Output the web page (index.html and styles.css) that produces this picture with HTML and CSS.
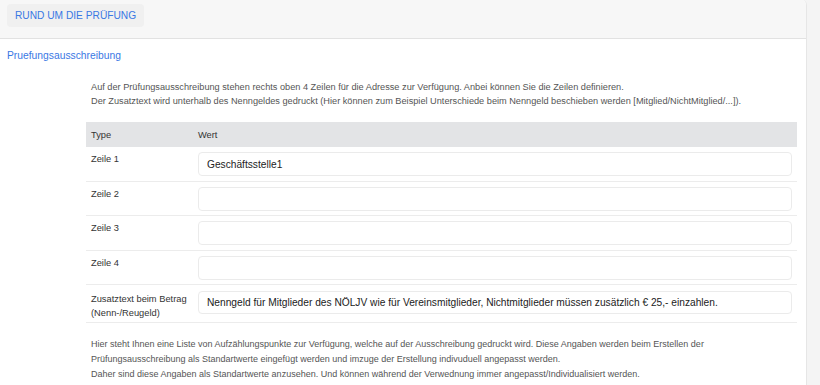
FILE: index.html
```html
<!DOCTYPE html>
<html lang="de">
<head>
    <meta charset="UTF-8">
    <title>Rund um die Prüfung</title>
    <link rel="stylesheet" href="styles.css">
</head>
<body>
<div class="card">
    <div class="cardHead">
        <a href="#" class="tab">RUND UM DIE PRÜFUNG</a>
    </div>
    <div class="cardBody">
        <h3 class="title">Pruefungsausschreibung</h3>
        <div class="content">
            <p class="intro">Auf der Prüfungsausschreibung stehen rechts oben 4 Zeilen für die Adresse zur Verfügung. Anbei können Sie die Zeilen definieren.<br>
                Der Zusatztext wird unterhalb des Nenngeldes gedruckt (Hier können zum Beispiel Unterschiede beim Nenngeld beschieben werden [Mitglied/NichtMitglied/...]).</p>
            <table class="grid">
                <thead>
                <tr><th class="colType">Type</th><th>Wert</th></tr>
                </thead>
                <tbody>
                <tr><td>Zeile 1</td><td><input type="text" value="Geschäftsstelle1"></td></tr>
                <tr><td>Zeile 2</td><td><input type="text" value=""></td></tr>
                <tr><td>Zeile 3</td><td><input type="text" value=""></td></tr>
                <tr><td>Zeile 4</td><td><input type="text" value=""></td></tr>
                <tr class="last"><td>Zusatztext beim Betrag<br>(Nenn-/Reugeld)</td><td><input type="text" value="Nenngeld für Mitglieder des NÖLJV wie für Vereinsmitglieder, Nichtmitglieder müssen zusätzlich € 25,- einzahlen."></td></tr>
                </tbody>
            </table>
            <!-- Aufzählungspunkte -->
            <p class="outro">Hier steht Ihnen eine Liste von Aufzählungspunkte zur Verfügung, welche auf der Ausschreibung gedruckt wird. Diese Angaben werden beim Erstellen der<br>
                Prüfungsausschreibung als Standartwerte eingefügt werden und imzuge der Erstellung indivuduell angepasst werden.<br>
                Daher sind diese Angaben als Standartwerte anzusehen. Und können während der Verwednung immer angepasst/Individualisiert werden.</p>
        </div>
    </div>
</div>
</body>
</html>
```

FILE: styles.css
```css
* {
    margin: 0;
    padding: 0;
    box-sizing: border-box;
}
body {
    background-color: #f4f4f4;
    font-family: "Liberation Sans", Arial, sans-serif;
    color: #333;
}
.card {
    width: 807px;
    height: 385px;
    background-color: #fff;
    border-right: 1px solid #e6e6e6;
    border-top-right-radius: 5px;
    overflow: hidden;
}
.cardHead {
    height: 39px;
    background-color: #f7f7f7;
    border-bottom: 1px solid #e2e2e2;
    padding: 4px 7px;
}
.tab {
    display: inline-block;
    height: 23px;
    line-height: 23px;
    padding: 0 8px;
    background-color: #f0f0f0;
    border-radius: 4px;
    color: #3a78e4;
    font-size: 10.2px;
    text-decoration: none;
}
.cardBody {
    padding: 10px 0 0 7px;
}
.title {
    font-size: 10.3px;
    font-weight: normal;
    color: #3a78e4;
    line-height: 14px;
}
.content {
    margin: 17px 0 0 79px;
    width: 711px;
}
.intro,
.outro {
    font-size: 9.2px;
    line-height: 14px;
    color: #555;
    padding-left: 5px;
}
.outro {
    font-size: 9px;
    margin-top: 14px;
    line-height: 15px;
}
.grid {
    width: 711px;
    margin-top: 14px;
    border-collapse: collapse;
    font-size: 9.3px;
    color: #333;
}
.grid th {
    background-color: #e3e4e6;
    font-weight: normal;
    text-align: left;
    height: 25px;
    padding: 0 5px;
}
.grid .colType {
    width: 107px;
}
.grid td {
    vertical-align: top;
    padding: 5px 5px 4.5px 5px;
    line-height: 14px;
    border-bottom: 1px solid #ececec;
}
.grid input {
    display: block;
    width: 100%;
    height: 24px;
    border: 1px solid #ebebeb;
    border-radius: 4px;
    padding: 0 8px;
    font-family: "Liberation Sans", Arial, sans-serif;
    font-size: 10.2px;
    color: #222;
    background-color: #fff;
}
.grid .last td {
    padding: 7px 5px 2px 5px;
}
.grid .last input {
    height: 23px;
    margin-top: -1px;
}
```
